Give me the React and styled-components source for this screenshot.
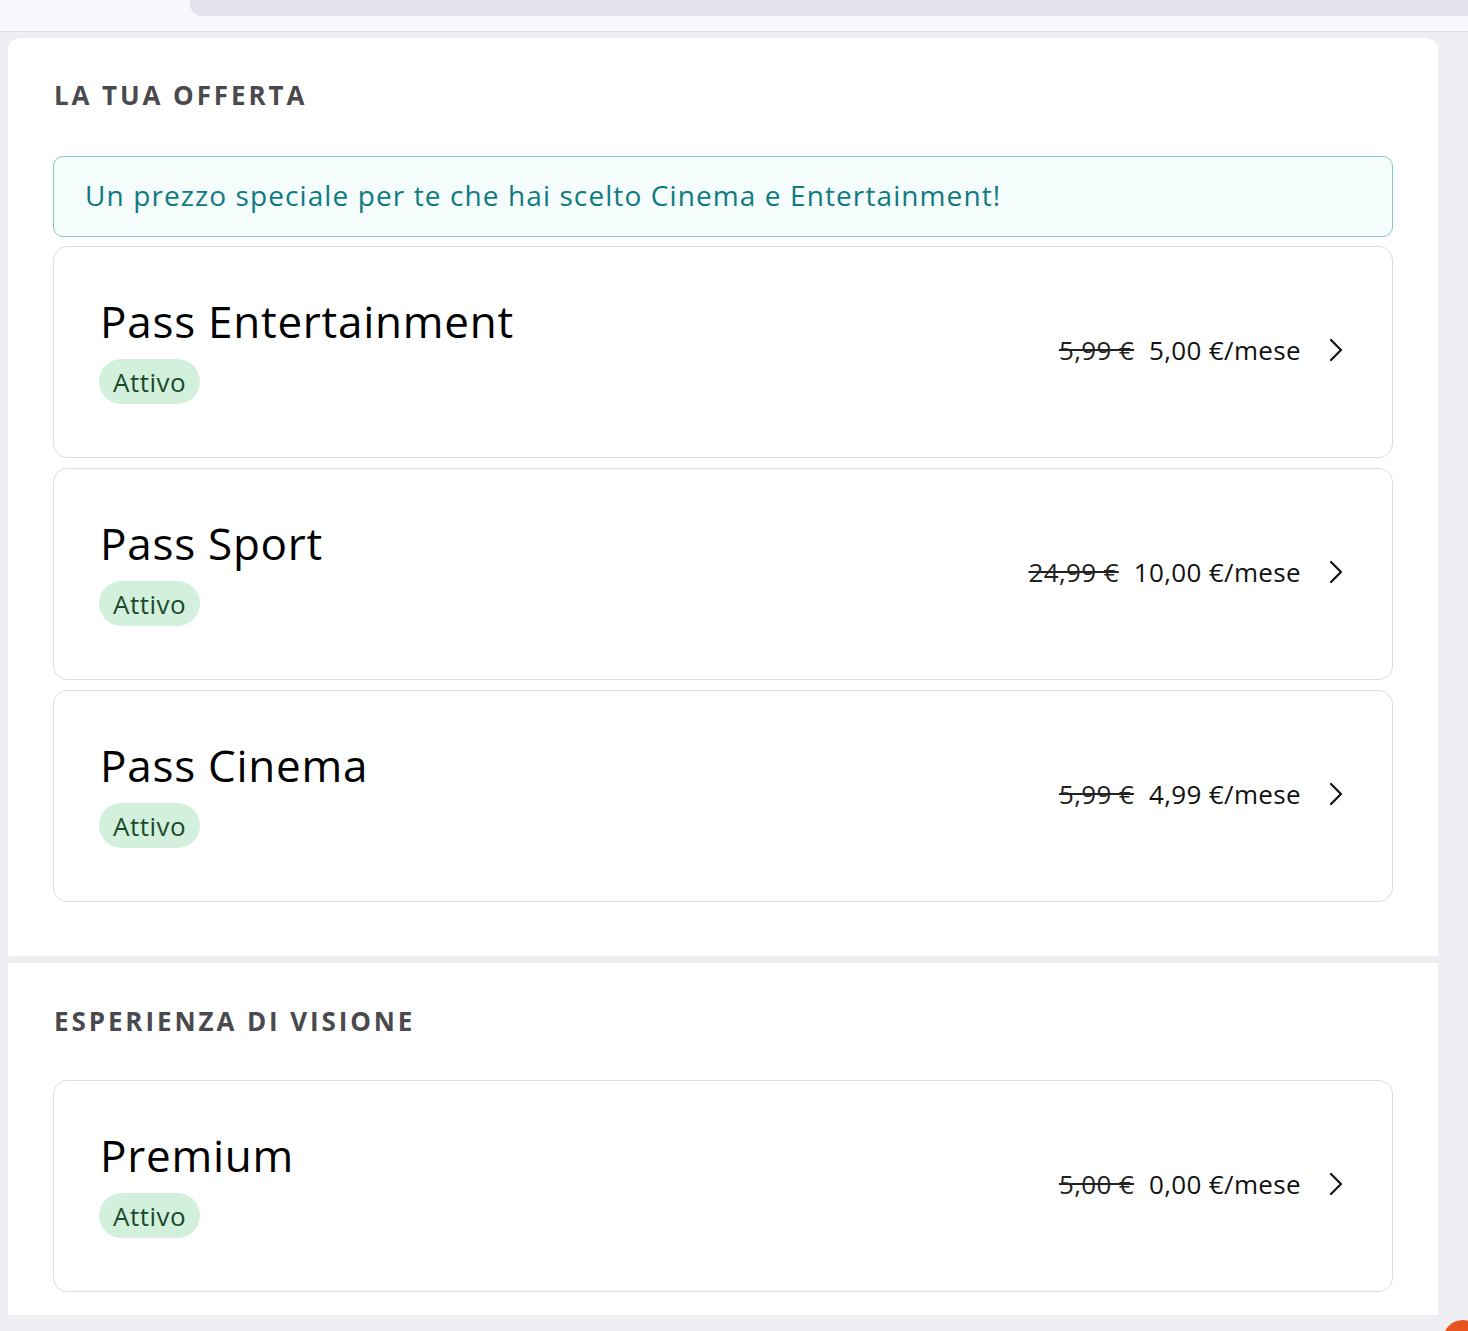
import React from 'react';
import styled, { createGlobalStyle } from 'styled-components';

const GlobalStyle = createGlobalStyle`
  html, body {
    margin: 0;
    padding: 0;
    background: #efeff3;
    font-family: "Open Sans", "Noto Sans", sans-serif;
  }
`;

const Page = styled.div`
  width: 1468px;
  min-height: 1331px;
  background: #efeff3;
  position: relative;
  overflow: hidden;
`;

const TopBar = styled.div`
  height: 31px;
  background: #f8f8fd;
  border-bottom: 1px solid #e0e0e8;
  padding-left: 190px;
`;

const Tab = styled.div`
  height: 16px;
  background: #e2e2ee;
  border-bottom-left-radius: 12px;
`;

const Content = styled.div`
  padding: 6px 30px 15px 8px;
  display: flex;
  flex-direction: column;
  gap: 7px;
`;

const Panel = styled.section`
  background: #fff;
  border-radius: ${(p) => (p.$first ? '12px 12px 0 0' : '0')};
  padding: ${(p) => (p.$first ? '42px 45px 54px' : '43px 45px 23px')};
`;

const Heading = styled.h2`
  margin: 0 0 ${(p) => p.$gap}px 1px;
  font-size: 26px;
  line-height: 30px;
  font-weight: 700;
  letter-spacing: 2.9px;
  color: #4a4a4e;
`;

const Banner = styled.div`
  height: 81px;
  box-sizing: border-box;
  display: flex;
  align-items: center;
  padding: 0 31px 4px;
  background: #f5fcfc;
  border: 1px solid #86c9cc;
  border-radius: 10px;
  color: #0e7b80;
  font-size: 28px;
  letter-spacing: 1.1px;
  margin-bottom: 9px;
`;

const CardList = styled.div`
  display: flex;
  flex-direction: column;
  gap: 10px;
`;

const Card = styled.div`
  height: 212px;
  box-sizing: border-box;
  border: 1px solid #dcdce0;
  border-radius: 14px;
  display: flex;
  align-items: center;
  justify-content: space-between;
  padding: 0 49px 4px 46px;
`;

const Info = styled.div`
  display: flex;
  flex-direction: column;
  align-items: flex-start;
  gap: 11px;
  margin-top: -2px;
`;

const Title = styled.div`
  font-size: 44px;
  line-height: 54px;
  color: #000;
  letter-spacing: 0.75px;
`;

const Badge = styled.span`
  display: inline-flex;
  align-items: center;
  height: 45px;
  padding: 0 14px 0 14px;
  margin-left: -1px;
  border-radius: 23px;
  background: #d3f0dd;
  color: #1b4a2c;
  font-size: 26px;
  letter-spacing: 0.5px;
`;

const Price = styled.div`
  display: flex;
  align-items: center;
  gap: 15px;
  font-size: 26px;
  letter-spacing: 0.35px;
  color: #111;
`;

const Old = styled.s`
  color: #222;
`;

const Chevron = styled.svg`
  width: 14px;
  height: 24px;
  margin-left: 13px;
`;

const offers = [
  { title: 'Pass Entertainment', old: '5,99 €', price: '5,00 €/mese' },
  { title: 'Pass Sport', old: '24,99 €', price: '10,00 €/mese' },
  { title: 'Pass Cinema', old: '5,99 €', price: '4,99 €/mese' },
];

const OfferCard = ({ title, old, price }) => (
  <Card>
    <Info>
      <Title>{title}</Title>
      <Badge>Attivo</Badge>
    </Info>
    <Price>
      <Old>{old}</Old>
      <span>{price}</span>
      <Chevron viewBox="0 0 14 24" fill="none">
        <path d="M2 2l10 10L2 22" stroke="#111" strokeWidth="2.2" strokeLinecap="round" strokeLinejoin="round" />
      </Chevron>
    </Price>
  </Card>
);

const Dot = styled.div`
  position: absolute;
  left: 1443px;
  top: 1320px;
  width: 40px;
  height: 40px;
  border-radius: 50%;
  background: #e8541e;
`;

export default function App() {
  return (
    <Page>
      <GlobalStyle />
      <TopBar>
        <Tab />
      </TopBar>
      <Content>
        <Panel $first>
          <Heading $gap={46}>LA TUA OFFERTA</Heading>
          <Banner>Un prezzo speciale per te che hai scelto Cinema e Entertainment!</Banner>
          <CardList>
            {offers.map((o) => (
              <OfferCard key={o.title} {...o} />
            ))}
          </CardList>
        </Panel>
        <Panel>
          <Heading $gap={44}>ESPERIENZA DI VISIONE</Heading>
          <CardList>
            <OfferCard title="Premium" old="5,00 €" price="0,00 €/mese" />
          </CardList>
        </Panel>
      </Content>
      <Dot />
    </Page>
  );
}
